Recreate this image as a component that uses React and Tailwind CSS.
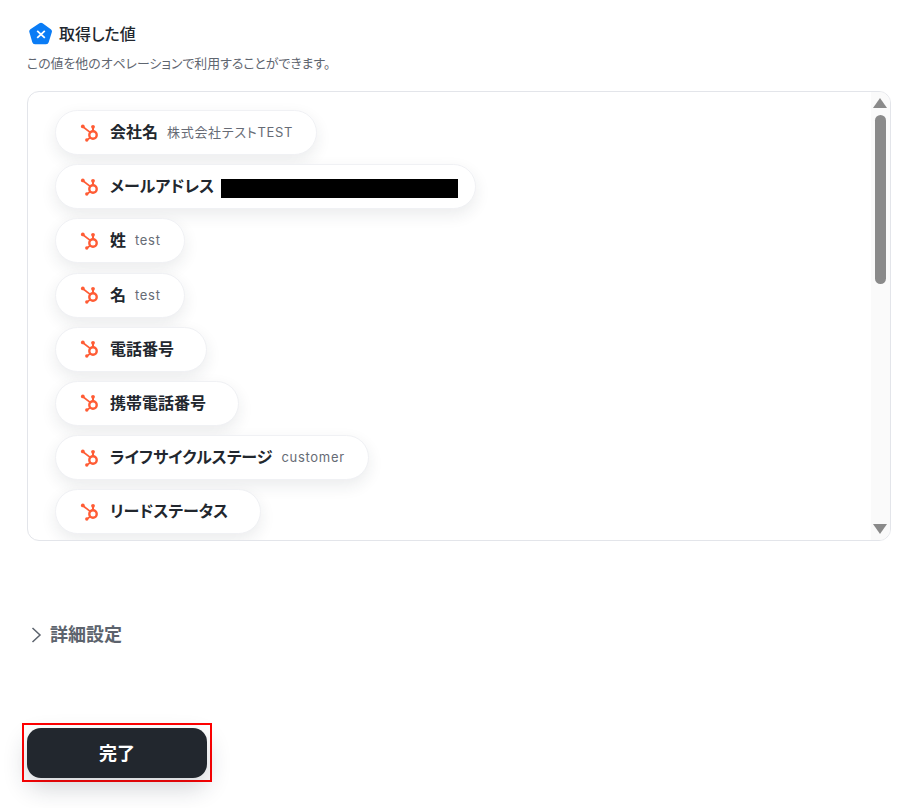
const fields = [
  { name: '会社名', value: '株式会社テストTEST' },
  { name: 'メールアドレス', redacted: true },
  { name: '姓', value: 'test' },
  { name: '名', value: 'test' },
  { name: '電話番号' },
  { name: '携帯電話番号' },
  { name: 'ライフサイクルステージ', value: 'customer' },
  { name: 'リードステータス' },
]

function HubspotIcon() {
  return (
    <svg width="20" height="20" viewBox="0 0 20 20" fill="none" className="shrink-0">
      <circle cx="13" cy="12" r="3.7" stroke="#ff5c35" strokeWidth="2.4" />
      <path d="M13 8V4" stroke="#ff5c35" strokeWidth="2" />
      <circle cx="13" cy="3.8" r="1.9" fill="#ff5c35" />
      <path d="M10.2 9.4L3.2 4" stroke="#ff5c35" strokeWidth="1.7" />
      <circle cx="2.8" cy="3.4" r="1.9" fill="#ff5c35" />
      <path d="M10.2 14.6L7 17" stroke="#ff5c35" strokeWidth="1.7" />
      <circle cx="6.8" cy="17" r="1.7" fill="#ff5c35" />
    </svg>
  )
}

function PentagonIcon() {
  return (
    <svg width="24" height="24" viewBox="0 0 24 24" className="shrink-0">
      <path
        d="M10.4 1.2a2.8 2.8 0 0 1 3.2 0l8.2 6a2.8 2.8 0 0 1 1 3.1l-3.1 9.9a2.8 2.8 0 0 1-2.7 2H6a2.8 2.8 0 0 1-2.7-2L.4 10.3a2.8 2.8 0 0 1 1-3.1z"
        fill="#0a7cf5"
      />
      <path d="M8.2 8.8l7.6 7M15.8 8.8l-7.6 7" stroke="#fff" strokeWidth="1.8" />
    </svg>
  )
}

function Pill({ field }) {
  return (
    <div className="flex h-[45px] w-fit items-center rounded-full border border-[#f0f1f4] bg-white pl-[24px] pr-[23px] shadow-[0_6px_16px_rgba(30,40,60,0.09)]">
      <HubspotIcon />
      <span className="mb-[1px] ml-[10px] text-[16px] font-bold leading-none text-[#22272e]">{field.name}</span>
      {field.redacted ? (
        <span className="ml-[7px] mr-[-6px] mt-[4px] h-[19px] w-[237px] bg-black" />
      ) : (
        <span className="ml-[9px] text-[13px] leading-none tracking-[0.7px] text-[#666b75]">{field.value}</span>
      )}
    </div>
  )
}

export default function App() {
  return (
    <div className="h-[808px] w-[910px] overflow-hidden bg-white pl-[27px] pt-[22px] font-['Inter','Noto_Sans_CJK_JP',sans-serif] [font-feature-settings:'palt']">
      {/* heading */}
      <div className="flex items-center gap-[6px] pl-[2px]">
        <PentagonIcon />
        <h2 className="text-[16px] font-medium leading-[24px] text-[#22272e]">取得した値</h2>
      </div>
      <p className="mt-[8px] text-[12.9px] leading-[20px] text-[#5f6670]">この値を他のオペレーションで利用することができます。</p>

      {/* values box */}
      <div className="mt-[17px] flex h-[450px] w-[864px] overflow-hidden rounded-[12px] border border-[#e3e5ea]">
        <div className="flex flex-1 flex-col gap-[9.2px] overflow-hidden pl-[27px] pt-[18px]">
          {fields.map(f => (
            <div key={f.name} className="shrink-0">
              <Pill field={f} />
            </div>
          ))}
        </div>
        <div className="flex w-[19px] shrink-0 flex-col items-center bg-[#fafafa] pr-[1px] pt-[6px]">
          <div className="h-0 w-0 border-x-[7px] border-b-[10px] border-x-transparent border-b-[#8a8a8a]" />
          <div className="mt-[7px] h-[169px] w-[11px] rounded-full bg-[#8a8a8a]" />
          <div className="mt-auto mb-[6px] h-0 w-0 border-x-[7px] border-t-[10px] border-x-transparent border-t-[#8a8a8a]" />
        </div>
      </div>

      {/* advanced settings */}
      <div className="mt-[80px] flex items-center gap-[8px] pl-[4px]">
        <svg width="11" height="16" viewBox="0 0 11 16" fill="none" className="shrink-0">
          <path d="M1.5 1l7.5 7-7.5 7" stroke="#5c636d" strokeWidth="1.5" />
        </svg>
        <span className="text-[18px] font-bold leading-[28px] text-[#5c636d]">詳細設定</span>
      </div>

      {/* submit, outlined in red in the original capture */}
      <div className="mt-[74px] ml-[-5px] w-fit border-2 border-[#f00] px-[3px] pb-[2px] pt-[3px]">
        <button className="block h-[50px] w-[180px] rounded-[14px] bg-[#22272e] text-[18px] font-bold text-white shadow-[0_10px_24px_rgba(30,40,60,0.2)]">
          完了
        </button>
      </div>
    </div>
  )
}
